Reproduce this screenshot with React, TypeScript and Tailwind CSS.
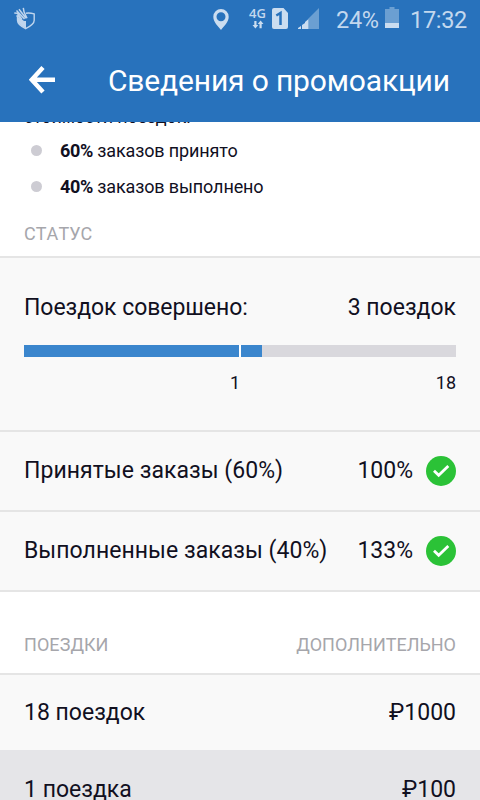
import type { ReactNode } from "react";

function ShieldIcon() {
  return (
    <svg width="22" height="23" viewBox="0 0 22 23" fill="none" stroke="#bfd5ed" className="shrink-0">
      <path d="M12 6.200c3-.6 5.500-.1 8.200.7v6.300c0 3.800-4.300 6.300-8.600 8.400-4.300-2-8.100-4.300-8.100-8.300V9" strokeWidth="1.400" />
      <path d="M4 10.500l3 1 3 2.500h2v7.500L7.500 19 4 15.500z" fill="#bfd5ed" stroke="none" />
      <path d="M.3 6l3 .2 4.500 6M2.500 3.500l8 8.500M5 2.200l7 9M9.300.8l.7 4 3 6.500M2.500 8.500l4 2.500" strokeWidth="1.500" />
    </svg>
  );
}

function StatusBar() {
  return (
    <div className="flex h-[38px] text-[#c3d8ee]">
      <div className="ml-[14px] mt-[7px]"><ShieldIcon /></div>
      <svg className="ml-[177px] mt-[9px] shrink-0" width="16" height="21" viewBox="0 0 16 21">
        <path fillRule="evenodd" fill="#cbddf0" d="M8 0a7.700 7.700 0 0 0-7.700 7.700C.3 13 5 17 8 21c3-4 7.700-8 7.700-13.300A7.700 7.700 0 0 0 8 0zm0 3.200a4.500 4.500 0 1 1 0 9 4.500 4.500 0 0 1 0-9z" />
      </svg>
      <div className="ml-[20px] mt-[6px] flex w-[17px] flex-col items-center">
        <span className="font-['Open_Sans','Noto_Sans',sans-serif] text-[13px] font-semibold leading-[14px]">4G</span>
        <svg width="12" height="9" viewBox="0 0 12 9" fill="#cbddf0">
          <path d="M2.300 1h2.200v4h1.800L3.400 8.500.5 5h1.800zM7.500 8.200h2.200V4h1.800L8.600.5 5.700 4h1.800z" />
        </svg>
      </div>
      <div className="ml-[6px] mt-[8px] shrink-0">
        <svg width="16" height="21" viewBox="0 0 16 21">
          <path fill="#cbddf0" d="M2 0h9.500L16 5v14a2 2 0 0 1-2 2H2a2 2 0 0 1-2-2V2a2 2 0 0 1 2-2z" />
          <path d="M4.300 7.500L8.500 5V17" fill="none" stroke="#2872bc" strokeWidth="2.500" />
        </svg>
      </div>
      <svg className="ml-[10px] mt-[8px] shrink-0" width="21" height="21" viewBox="0 0 21 21">
        <path fill="#6b9fd2" d="M10.500 10.500L21 0v21H10.500z" />
        <path fill="#cbddf0" d="M0 21v-1l3-2v3zM4 21v-4l3-2v6zM7 21v-7l3.500-3v10z" />
      </svg>
      <span className="ml-[17px] mt-[5px] w-[43px] whitespace-nowrap text-[23.500px] leading-[30px] tracking-[-0.3px]">24%</span>
      <svg className="ml-[6px] mt-[7px] shrink-0" width="14" height="21" viewBox="0 0 14 21">
        <path fill="#6b9fd2" d="M4.500 0h5v2H14v14H0V2h4.500z" />
        <path fill="#cbddf0" d="M0 16h14v5H0z" />
      </svg>
      <span className="ml-[11px] mt-[5px] whitespace-nowrap text-[23.500px] leading-[30px] tracking-[-0.3px]">17:32</span>
    </div>
  );
}

function Bullet({ value, children }: { value: string; children: ReactNode }) {
  return (
    <li className="flex h-9 items-center text-[18px] tracking-[-0.13px]">
      <span className="ml-[31px] mr-[18px] size-[11px] rounded-full bg-[#cdccd3]" />
      <span className="whitespace-nowrap"><b className="font-bold tracking-[-0.35px]">{value}</b> {children}</span>
    </li>
  );
}

function CheckRow({ label, value }: { label: string; value: string }) {
  return (
    <div className="flex h-20 items-center border-b-2 border-[#e5e5e5] bg-[#f9f9f9] px-6 text-[23px] leading-[30px]">
      <span className="flex-1 whitespace-nowrap tracking-[0.04px]">{label}</span>
      <span>{value}</span>
      <svg className="ml-[13px]" width="30" height="30" viewBox="0 0 30 30">
        <circle cx="15" cy="15" r="15" fill="#2bc237" />
        <path d="M8 14.700l4.700 4.600 9.600-9.300" fill="none" stroke="#fff" strokeWidth="2.800" />
      </svg>
    </div>
  );
}

export default function App() {
  return (
    <div className="flex h-[800px] w-[480px] flex-col overflow-hidden bg-white font-['Roboto','Noto_Sans',sans-serif] text-[#11101f]">
      <header className="h-[122px] shrink-0 bg-[#2872bc]">
        <StatusBar />
        <div className="flex h-[84px] items-center text-white">
          <svg className="ml-[29px] mr-[53px] shrink-0" width="26" height="28" viewBox="0 0 26 28" fill="none" stroke="#fff" strokeWidth="4.400">
            <path d="M14 1.500L2.800 13.700 14 26M3 13.700h23" />
          </svg>
          <h1 className="whitespace-nowrap pt-0.5 text-[30px] leading-9 tracking-[-0.16px]">Сведения о промоакции</h1>
        </div>
      </header>

      <section className="h-[134px] shrink-0 overflow-hidden">
        <div className="-mt-[23px] h-[33px] pl-6 text-[18px] leading-[36px] tracking-[-0.17px]">стоимости поездок:</div>
        <ul>
          <Bullet value="60%">заказов принято</Bullet>
          <Bullet value="40%">заказов выполнено</Bullet>
        </ul>
        <h2 className="mt-[17px] pl-6 text-[18px] leading-[26px] tracking-[0.06px] text-[#a6a6ab] [font-kerning:none]">СТАТУС</h2>
      </section>

      <section className="h-[176px] shrink-0 border-y-2 border-[#e5e5e5] bg-[#f9f9f9] px-6 pt-[35px]">
        <div className="flex justify-between text-[23px] leading-[30px]">
          <span className="tracking-[-0.05px]">Поездок совершено:</span>
          <span>3 поездок</span>
        </div>
        <div className="mt-[22px] flex h-3 bg-[#d9d8dd]">
          <div className="w-[215px] bg-[#3b86cd]" />
          <div className="w-0.5 bg-white" />
          <div className="w-[21px] bg-[#3b86cd]" />
        </div>
        <div className="mt-[13px] flex text-right text-[18px] leading-[26px]">
          <span className="w-[216px]">1</span>
          <span className="w-[216px]">18</span>
        </div>
      </section>

      <div className="shrink-0">
        <CheckRow label="Принятые заказы (60%)" value="100%" />
        <CheckRow label="Выполненные заказы (40%)" value="133%" />
      </div>

      <div className="flex h-[83px] shrink-0 justify-between border-b-2 border-[#e5e5e5] px-6 pt-10 text-[18px] leading-[26px] text-[#a6a6ab] [font-kerning:none]">
        <h2 className="tracking-[0.06px]">ПОЕЗДКИ</h2>
        <h2>ДОПОЛНИТЕЛЬНО</h2>
      </div>
      <div className="flex h-[75px] shrink-0 items-center justify-between bg-[#f9f9f9] px-6 text-[23px] leading-[30px]">
        <span>18 поездок</span>
        <span>₽1000</span>
      </div>
      <div className="flex h-[50px] shrink-0 justify-between bg-[#e5e5e8] px-6 pt-[25px] text-[23px] leading-[30px]">
        <span>1 поездка</span>
        <span>₽100</span>
      </div>
    </div>
  );
}
